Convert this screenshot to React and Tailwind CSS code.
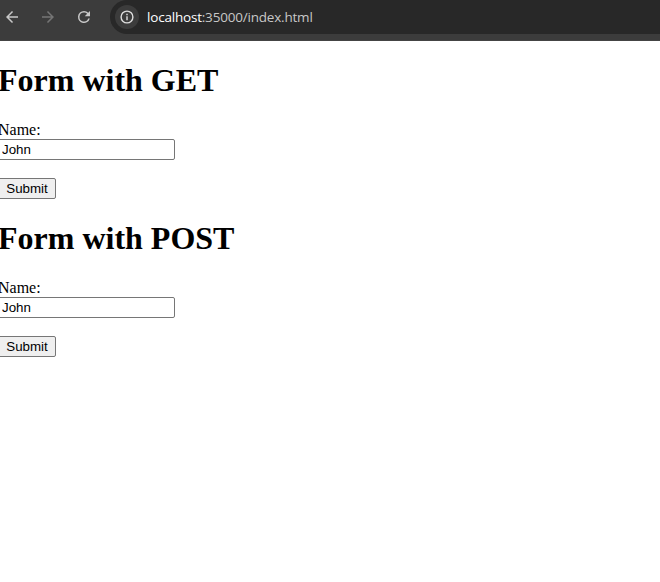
function BackIcon({ className = "" }) {
  return (
    <svg viewBox="0 0 24 24" fill="currentColor" className={`size-[18px] shrink-0 ${className}`}>
      <path d="M20 11H7.83l5.59-5.59L12 4l-8 8 8 8 1.41-1.41L7.83 13H20v-2z" />
    </svg>
  );
}

function ReloadIcon() {
  return (
    <svg viewBox="0 0 24 24" fill="currentColor" className="size-[18px] shrink-0">
      <path d="M17.65 6.35A7.96 7.96 0 0 0 12 4a8 8 0 1 0 7.73 10h-2.08A6 6 0 1 1 12 6c1.66 0 3.14.69 4.22 1.78L13 11h7V4l-2.35 2.35z" />
    </svg>
  );
}

function InfoIcon() {
  return (
    <svg viewBox="0 0 14 14" fill="none" stroke="currentColor" strokeWidth="1.4" className="size-3.5">
      <circle cx="7" cy="7" r="5.9" />
      <path d="M7 6.3v3.9M7 3.8v1.4" />
    </svg>
  );
}

function NameForm({ title }) {
  return (
    <form className="mb-[21px]" onSubmit={(event) => event.preventDefault()}>
      <h1 className="mb-[22px] h-[37px] text-[32px] leading-[37px] font-bold">{title}</h1>
      <label className="block h-[18px] text-base leading-[18px]">Name:</label>
      <input
        type="text"
        defaultValue="John"
        className="block h-[21px] w-[177px] rounded-[2px] border border-[#767676] bg-white px-[3px] font-['Liberation_Sans',Arial,sans-serif] text-[13.333px] leading-[15px]"
      />
      <button
        type="submit"
        className="mt-[18px] block h-[21px] w-[58px] rounded-[2px] border border-[#767676] bg-[#efefef] text-center font-['Liberation_Sans',Arial,sans-serif] text-[13.333px] leading-[19px]"
      >
        Submit
      </button>
    </form>
  );
}

export default function App() {
  return (
    <div className="h-[582px] w-[660px] overflow-hidden bg-white text-black">
      <header className="flex h-[41px] items-start border-b border-[#444444] bg-[#3c3c3c] text-[#c7c7c7]">
        <nav className="flex h-[34px] w-[110px] shrink-0 items-center gap-[18px] pl-[3px]">
          <BackIcon />
          <BackIcon className="rotate-180 text-[#757575]" />
          <ReloadIcon />
        </nav>
        <div className="flex h-[34px] flex-1 items-center rounded-l-full bg-[#282828] pl-[5px]">
          <span className="flex size-6 items-center justify-center rounded-full bg-[#3c3c3c] text-[#dedede]">
            <InfoIcon />
          </span>
          <span className="ml-2 font-['Open_Sans','Noto_Sans',sans-serif] text-[13.5px] leading-5 tracking-[-0.2px] whitespace-nowrap text-[#c7c7c7]">
            <span className="text-white">localhost</span>:35000/index.html
          </span>
        </div>
      </header>
      <main className="-ml-0.5 pt-[21px] font-['Liberation_Serif','Times_New_Roman',serif]">
        <NameForm title="Form with GET" />
        <NameForm title="Form with POST" />
      </main>
    </div>
  );
}
